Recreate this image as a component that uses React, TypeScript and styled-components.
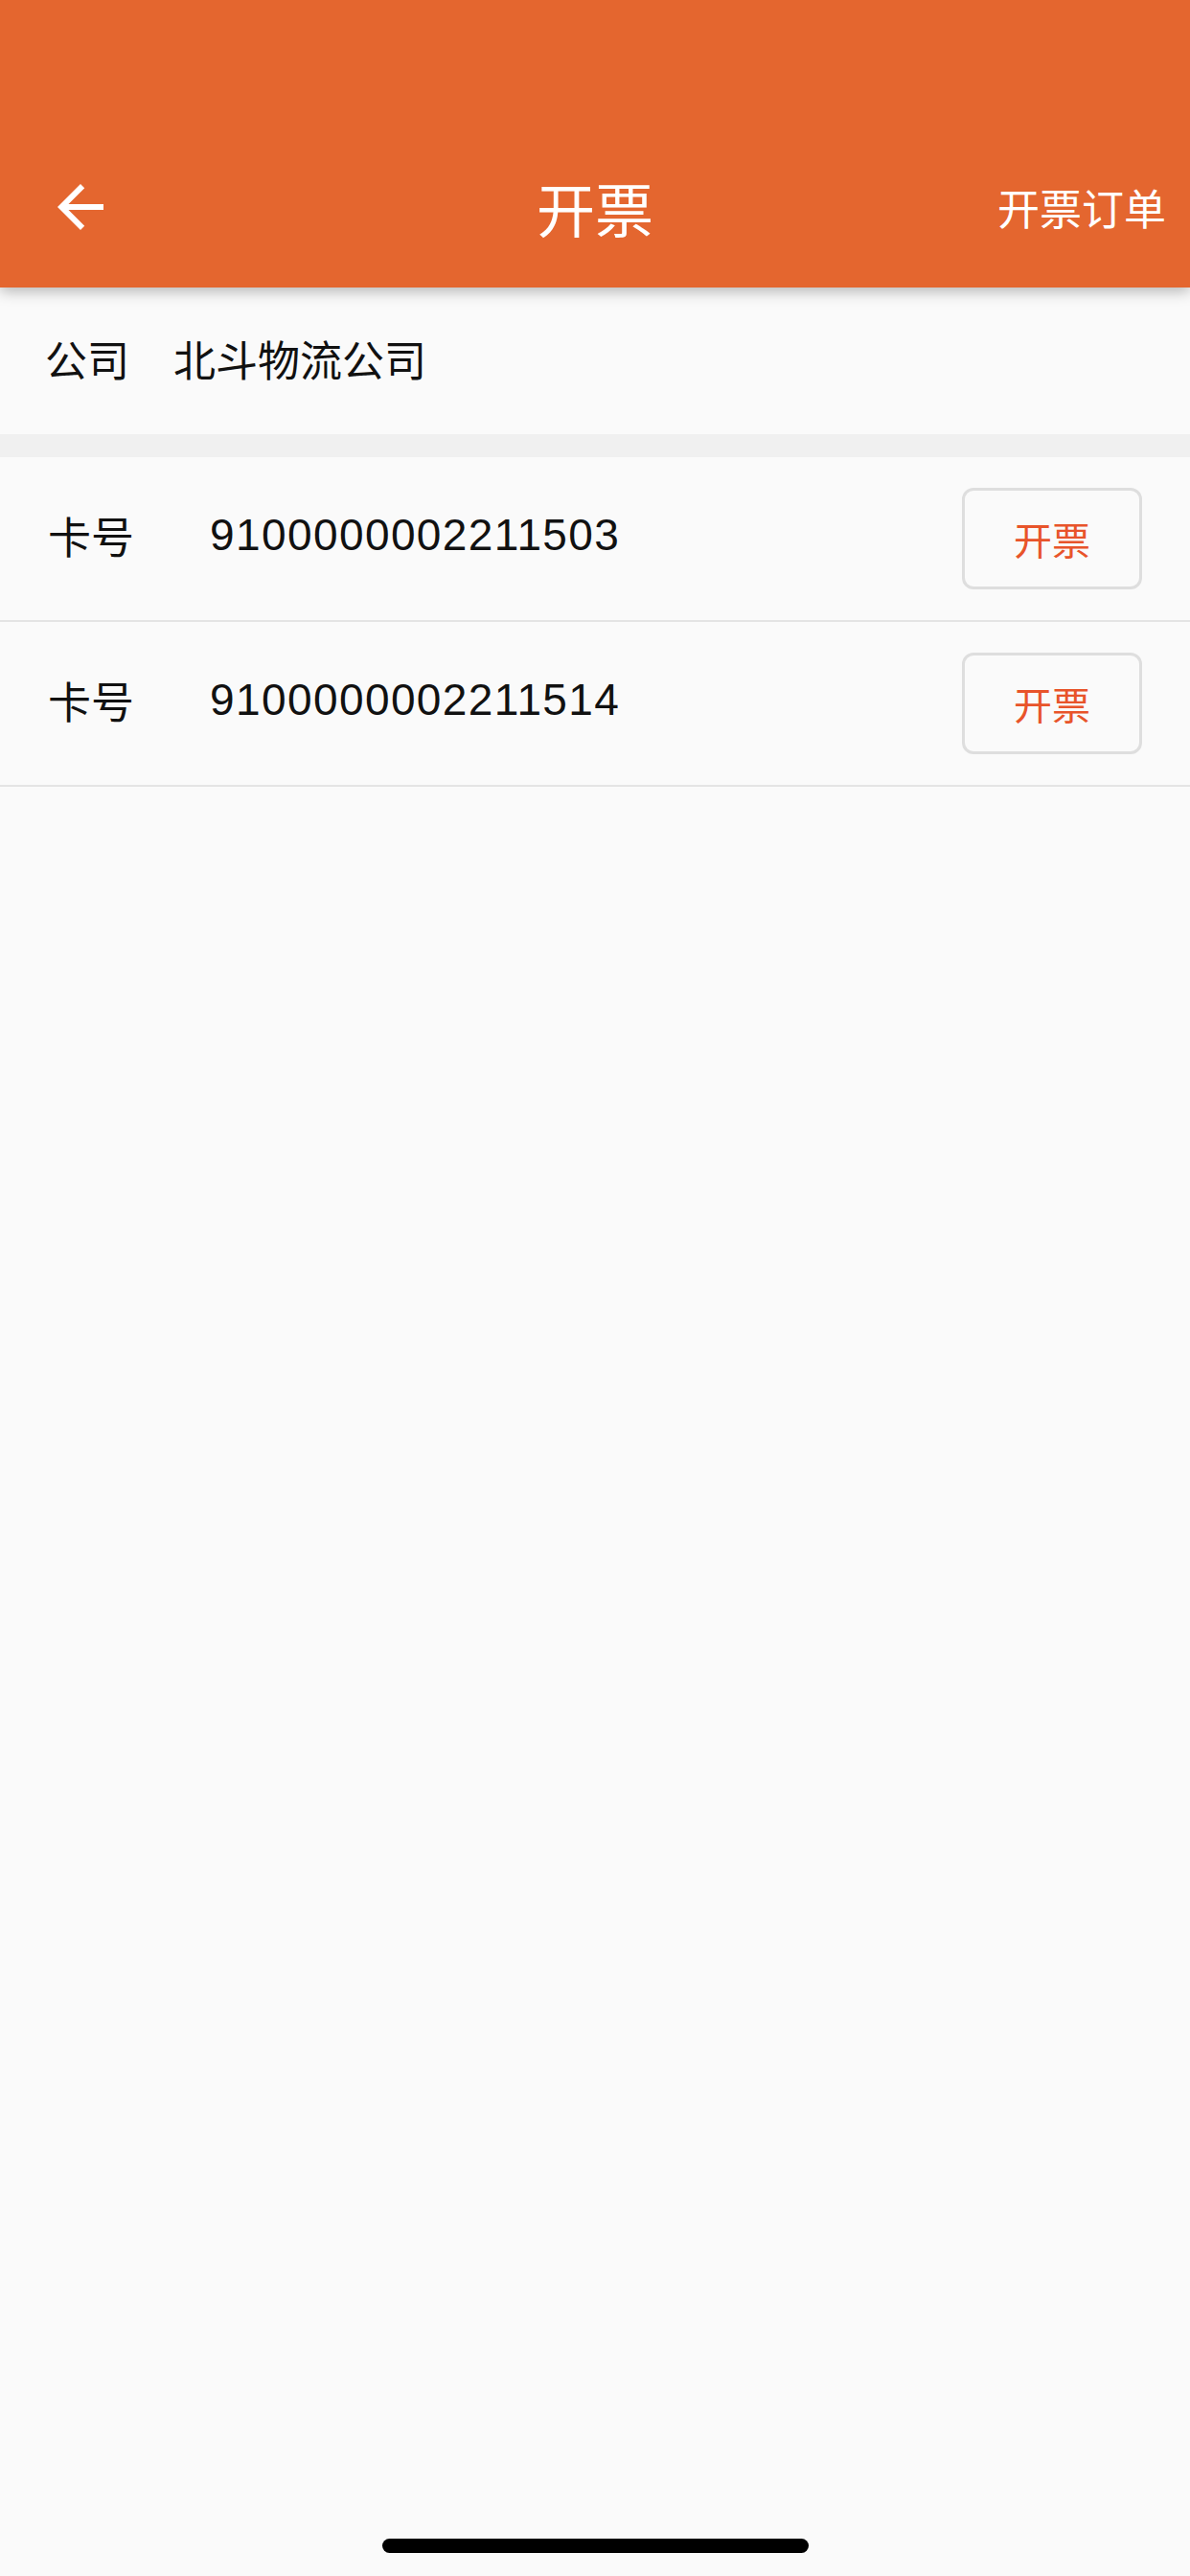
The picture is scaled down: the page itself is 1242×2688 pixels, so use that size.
import React from 'react';
import styled, { createGlobalStyle } from 'styled-components';

const Global = createGlobalStyle`
    html, body {
        margin: 0;
        padding: 0;
        background: #fafafa;
    }
    body {
        font-family: "Liberation Sans", "Noto Sans CJK SC", sans-serif;
        color: #111;
    }
`;

const cards = ['9100000002211503', '9100000002211514'];

const BackIcon = () => (
    <svg width="72" height="72" viewBox="0 0 24 24" fill="#fff">
        <path d="M20 11H7.83l5.59-5.59L12 4l-8 8 8 8 1.41-1.41L7.83 13H20v-2z" />
    </svg>
);

const App = () => {
    return (
        <>
            <Global />
            <Page>
                <Header>
                    <Nav>
                        <Back><BackIcon /></Back>
                        <Title>开票</Title>
                        <Action>开票订单</Action>
                    </Nav>
                </Header>
                <Company>
                    <Label>公司</Label>
                    <Label>北斗物流公司</Label>
                </Company>
                <Gap />
                {cards.map(no => (
                    <CardRow key={no}>
                        <Label>卡号</Label>
                        <CardNo>{no}</CardNo>
                        <Button>开票</Button>
                    </CardRow>
                ))}
                <HomeBar />
            </Page>
        </>
    );
};

const Page = styled.div`
    position: relative;
    min-height: 2688px;
    background: #fafafa;
`;

const Header = styled.header`
    position: relative;
    z-index: 2;
    background: #e4662f;
    padding-top: 132px;
    box-shadow: 0 4px 14px rgba(0, 0, 0, 0.28);
`;

const Nav = styled.div`
    height: 168px;
    display: grid;
    grid-template-columns: 1fr auto 1fr;
    align-items: center;
    color: #fff;
`;

const Back = styled.div`
    padding-left: 48px;
    display: flex;
    align-items: center;
`;

const Title = styled.div`
    font-family: "Noto Sans CJK SC", sans-serif;
    font-size: 61px;
    line-height: 1;
`;

const Action = styled.div`
    justify-self: end;
    padding-right: 25px;
    font-family: "Noto Sans CJK SC", sans-serif;
    font-size: 44px;
    line-height: 1;
`;

const Company = styled.div`
    height: 153px;
    box-sizing: border-box;
    padding: 0 0 6px 47px;
    display: flex;
    align-items: center;
    gap: 46px;
    & > span {
        font-size: 44px;
    }
`;

const Label = styled.span`
    font-family: "Noto Sans CJK SC", sans-serif;
    font-size: 45px;
    line-height: 1;
`;

const Gap = styled.div`
    height: 24px;
    background: #f0f0f0;
`;

const CardRow = styled.div`
    height: 170px;
    box-sizing: content-box;
    display: grid;
    grid-template-columns: 169px 1fr auto;
    align-items: center;
    padding: 0 50px;
    border-bottom: 2px solid #e4e4e4;
    & > span {
        margin-bottom: 8px;
    }
`;

const CardNo = styled.span`
    font-size: 46px;
    line-height: 1;
    letter-spacing: 1.4px;
`;

const Button = styled.button`
    width: 188px;
    height: 106px;
    border: 3px solid #dedede;
    border-radius: 12px;
    background: transparent;
    color: #e8542a;
    font-family: "Noto Sans CJK SC", sans-serif;
    font-size: 40px;
    padding: 0;
`;

const HomeBar = styled.div`
    position: absolute;
    left: 399px;
    top: 2649px;
    width: 445px;
    height: 15px;
    border-radius: 8px;
    background: #000;
`;

export default App;
